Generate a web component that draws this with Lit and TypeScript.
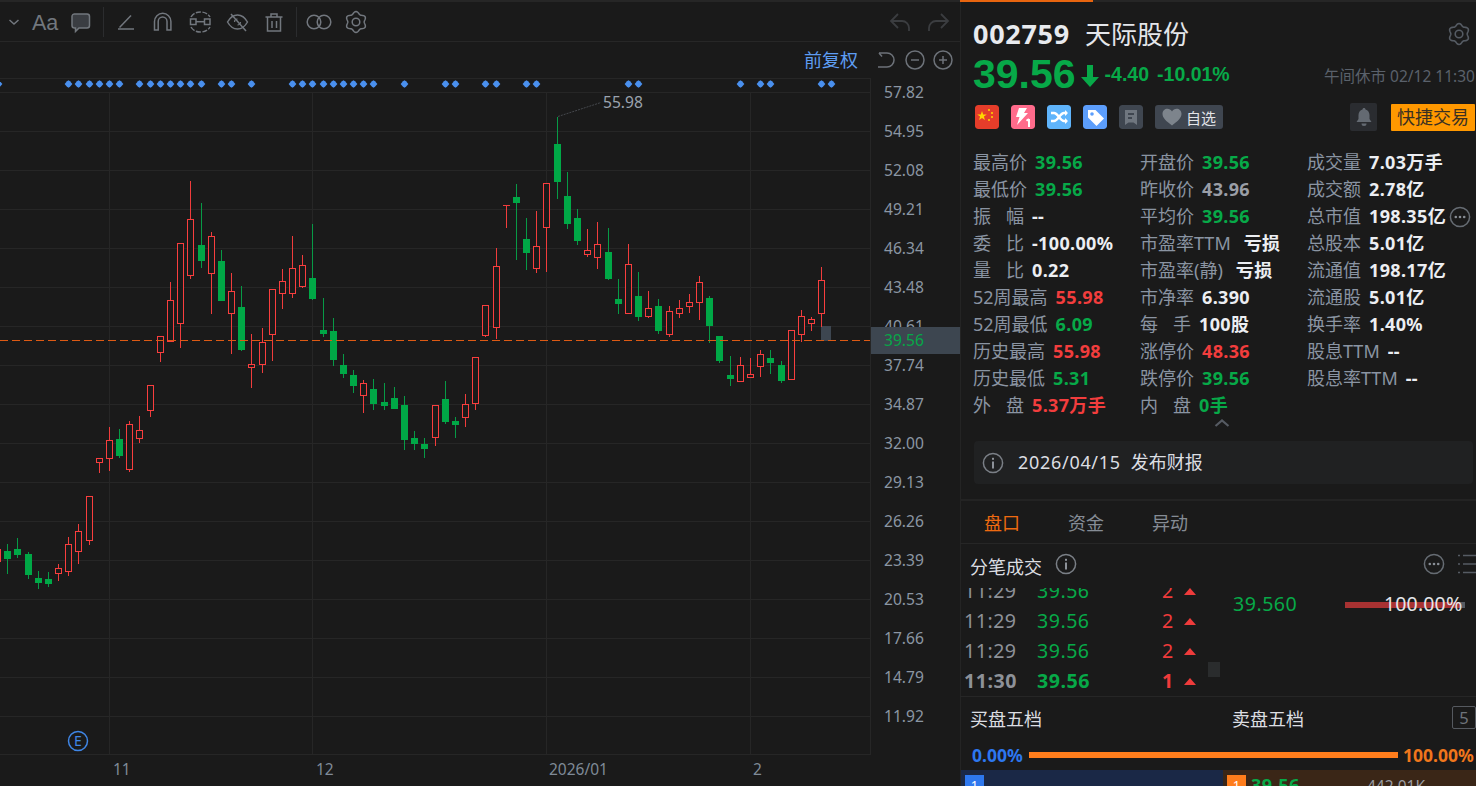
import { LitElement, html, css, svg } from "lit";
import { customElement } from "lit/decorators.js";

type C = [number, number, number, number, number, "r" | "g"];
// x, wick top, wick bottom, body top, body bottom, colour
const CANDLES: C[] = [
  [-3,549,562,549,562,"r"],[7,544,574,551,559,"g"],[17,538,558,549,555,"g"],[28,552,579,554,575,"g"],[38,571,589,578,583,"g"],[48,572,587,579,584,"g"],
  [58,564,581,568,574,"r"],[68,537,576,544,572,"r"],[78,524,564,531,552,"r"],[89,496,545,496,541,"r"],[99,458,473,458,463,"r"],[109,427,471,440,459,"r"],
  [119,429,458,439,456,"g"],[129,421,472,424,470,"r"],[139,416,443,430,439,"r"],[150,385,417,385,411,"r"],[160,336,362,336,353,"r"],[170,282,342,300,342,"r"],
  [180,243,348,243,324,"r"],[190,181,279,219,276,"r"],[201,203,268,245,261,"g"],[211,232,314,236,274,"r"],[221,250,301,261,301,"g"],[231,273,354,291,314,"r"],
  [241,286,351,307,350,"g"],[251,334,388,364,368,"r"],[262,328,373,342,365,"r"],[272,289,361,289,335,"r"],[282,269,309,281,294,"r"],[292,236,298,268,294,"r"],
  [302,255,288,265,287,"r"],[312,224,300,278,299,"g"],[323,298,337,330,334,"g"],[333,318,366,331,360,"g"],[343,354,378,365,374,"g"],[353,370,393,375,386,"g"],
  [363,380,413,383,396,"r"],[373,379,410,389,404,"g"],[384,383,410,402,406,"g"],[394,387,409,398,409,"g"],[404,396,450,405,440,"g"],[414,431,450,438,444,"g"],
  [424,438,458,444,449,"g"],[435,405,446,405,438,"r"],[445,381,424,399,422,"g"],[455,417,438,421,425,"g"],[465,394,427,404,418,"r"],[475,357,410,357,404,"r"],
  [485,305,337,305,336,"r"],[496,248,339,266,328,"r"],[506,205,228,205,205,"r"],[516,184,260,197,203,"g"],[526,218,270,239,253,"g"],[536,211,273,246,269,"r"],
  [546,183,272,183,228,"r"],[557,117,199,144,182,"g"],[567,172,229,196,224,"g"],[577,209,245,218,241,"g"],[587,229,257,250,255,"r"],[597,222,269,244,258,"r"],
  [608,228,280,252,279,"g"],[618,279,314,299,304,"g"],[628,244,314,264,314,"r"],[638,272,321,296,317,"g"],[648,291,318,308,317,"r"],[658,299,334,306,331,"g"],
  [669,306,337,311,335,"r"],[679,300,318,308,314,"r"],[689,294,313,302,307,"r"],[699,276,320,282,303,"r"],[709,296,343,298,326,"g"],[719,336,363,336,361,"g"],
  [730,356,386,375,379,"g"],[740,357,382,365,382,"r"],[750,358,378,374,378,"r"],[760,350,377,354,367,"r"],[770,350,374,358,363,"g"],[781,361,383,365,381,"g"],
  [791,330,380,330,380,"r"],[801,310,342,316,335,"r"],[811,317,331,319,324,"r"],[821,267,327,280,314,"r"],
];
const DIAMONDS = [-2,68,78,89,99,109,119,139,150,160,170,180,190,201,221,231,251,292,302,312,323,333,343,353,363,373,404,445,455,485,496,526,536,628,638,740,760,770,821,831];
const PRICES = ["57.82","54.95","52.08","49.21","46.34","43.48","40.61","37.74","34.87","32.00","29.13","26.26","23.39","20.53","17.66","14.79","11.92"];
const VLINES = [109, 312, 546, 750];

const TOP = 78;

interface Cell { l: string; v: string; c?: string; sp?: boolean; g?: number; m?: boolean }
const STATS: Cell[][] = [
  [
    { l: "最高价", v: "39.56", c: "g" }, { l: "最低价", v: "39.56", c: "g" }, { l: "振幅", v: "--", sp: true },
    { l: "委比", v: "-100.00%", sp: true }, { l: "量比", v: "0.22", sp: true }, { l: "52周最高", v: "55.98", c: "r" },
    { l: "52周最低", v: "6.09", c: "g" }, { l: "历史最高", v: "55.98", c: "r" }, { l: "历史最低", v: "5.31", c: "g" },
    { l: "外盘", v: "5.37万手", c: "r", sp: true },
  ],
  [
    { l: "开盘价", v: "39.56", c: "g" }, { l: "昨收价", v: "43.96", c: "n" }, { l: "平均价", v: "39.56", c: "g" },
    { l: "市盈率TTM", v: "亏损", g: 13 }, { l: "市盈率(静)", v: "亏损", g: 13 }, { l: "市净率", v: "6.390" },
    { l: "每手", v: "100股", sp: true }, { l: "涨停价", v: "48.36", c: "r" }, { l: "跌停价", v: "39.56", c: "g" },
    { l: "内盘", v: "0手", c: "g", sp: true },
  ],
  [
    { l: "成交量", v: "7.03万手" }, { l: "成交额", v: "2.78亿" }, { l: "总市值", v: "198.35亿", m: true },
    { l: "总股本", v: "5.01亿" }, { l: "流通值", v: "198.17亿" }, { l: "流通股", v: "5.01亿" },
    { l: "换手率", v: "1.40%" }, { l: "股息TTM", v: "--" }, { l: "股息率TTM", v: "--" },
  ],
];
const TICKS = [
  { t: "11:29", p: "39.56", n: "2" }, { t: "11:29", p: "39.56", n: "2" }, { t: "11:29", p: "39.56", n: "2" }, { t: "11:30", p: "39.56", n: "1", b: true },
];

// six rounded lobes around a centre, pointing up first
function gearPath(cx: number, cy: number, R: number) {
  const pts: string[] = [];
  for (let i = 0; i < 72; i++) {
    const a = (i / 72) * Math.PI * 2;
    const r = R * (0.89 + 0.11 * Math.cos(6 * a));
    const x = cx + r * Math.sin(a);
    const y = cy - r * Math.cos(a);
    pts.push(`${x.toFixed(2)} ${y.toFixed(2)}`);
  }
  return "M" + pts.join("L") + "Z";
}

const gear = svg`<svg class="ic" width="24" height="24" viewBox="0 0 24 24" fill="none" stroke="currentColor" stroke-width="1.600"><path d=${gearPath(12, 12, 10.500)}/><circle cx="12" cy="12" r="3.800"/></svg>`;

const moreCircle = svg`<svg width="22" height="22" viewBox="0 0 22 22" fill="none"><circle cx="11" cy="11" r="9.600" stroke="#666c73" stroke-width="1.500"/><circle cx="6.800" cy="11" r="1.300" fill="#888e95"/><circle cx="11" cy="11" r="1.300" fill="#888e95"/><circle cx="15.200" cy="11" r="1.300" fill="#888e95"/></svg>`;
const infoCircle = svg`<svg width="22" height="22" viewBox="0 0 22 22" fill="none"><circle cx="11" cy="11" r="9.600" stroke="#7a7f86" stroke-width="1.500"/><rect x="10" y="9.500" width="2" height="7" fill="#8d9299"/><rect x="10" y="5.800" width="2" height="2" fill="#8d9299"/></svg>`;

@customElement("app-root")
export class AppRoot extends LitElement {
  static styles = css`
    :host { display: block; width: 1476px; height: 786px; overflow: hidden; background: #1a1a1a; font-family: "Noto Sans", "Noto Sans CJK SC", sans-serif; color: #d8dade; }
    * { box-sizing: border-box; }
    .page { display: flex; width: 1476px; height: 786px; border-top: 2px solid #262626; position: relative; }
    .progress { position: absolute; left: 960px; top: -2px; width: 133px; height: 2px; background: #e8650f; }
    .left { width: 960px; flex: none; display: flex; flex-direction: column; }
    .toolbar { height: 40px; border-bottom: 1px solid #272727; flex: none; }
    .toolbar svg { display: block; }
    .subbar { height: 36px; flex: none; display: flex; justify-content: flex-end; align-items: center; padding-right: 7px; gap: 0; }
    .fq { font-size: 18px; color: #5e9df2; margin-right: 19px; line-height: 24px; }
    .subbar svg { display: block; margin-right: 8px; }
    .subbar svg:last-child { margin-right: 0; }
    .plotrow { display: flex; height: 677px; flex: none; position: relative; }
    .plot { width: 871px; height: 677px; flex: none; display: block; }
    .axis { flex: 1; display: flex; flex-direction: column; padding-top: 0; position: relative; }
    .axis span { height: 39px; line-height: 39px; padding-left: 13px; font-size: 15.6px; color: #8b96a3; }
    .axis .first { margin-top: -5px; }
    .marker { position: absolute; left: 0; right: 0; top: 249px; height: 27px; line-height: 27px; padding-left: 13px; background: #3d4650; color: #06a648; font-size: 15.6px; }
    .xaxis { position: relative; flex: 1; font-size: 15.5px; color: #7f8a97; }
    .xaxis span { position: absolute; top: 2px; line-height: 24px; }
    .right { width: 516px; flex: none; display: flex; flex-direction: column; overflow: hidden; box-shadow: inset 1px 0 0 #242424; }
    .head { padding: 17px 1px 0 13px; height: 147px; flex: none; }
    .l1 { display: flex; align-items: center; height: 30px; }
    .code { font-weight: 700; font-size: 27px; letter-spacing: .7px; color: #e8eaee; width: 112px; line-height: 30px; }
    .name { font-size: 26px; color: #e4e6ea; line-height: 30px; }
    .l1 .ic { margin-left: auto; color: #555b63; margin-right: 4px; display: block; }
    .l2 { display: flex; align-items: center; height: 44px; margin-top: 3px; white-space: nowrap; color: #07a948; font-family: "Liberation Sans", sans-serif; font-weight: 700; }
    .big { font-size: 41px; line-height: 44px; }
    .arrow { margin: 3px 6px 0 5px; display: block; }
    .chg { font-size: 19.500px; margin-right: 8px; line-height: 24px; margin-top: 0; }
    .time { margin-left: auto; font: 400 15.500px "Noto Sans", "Noto Sans CJK SC", sans-serif; color: #5a616b; margin-top: 2px; margin-right: -13px; width: 164px; }
    .l3 { display: flex; align-items: center; margin-top: 7px; height: 28px; padding-left: 2px; }
    .badge { width: 24px; height: 24px; border-radius: 3px; margin-right: 12px; display: block; }
    .fav { width: 68px; height: 24px; border-radius: 3px; background: #3f4650; display: flex; align-items: center; padding-left: 7px; gap: 4px; font-size: 15px; color: #e2e4e8; }
    .bell { margin-left: auto; width: 27px; height: 28px; background: #2a2c30; border-radius: 2px; display: flex; align-items: center; justify-content: center; margin-right: 14px; }
    .quick { width: 84px; height: 27px; background: #ff9800; color: #3a3022; font-size: 18px; text-align: center; line-height: 27px; border-radius: 1px; }
    .stats { display: grid; grid-template-columns: 167px 167px 1fr; padding-left: 13px; height: 270px; flex: none; }
    .col { display: flex; flex-direction: column; }
    .cell { height: 27px; display: flex; align-items: center; font-size: 18px; line-height: 27px; white-space: nowrap; gap: 8px; position: relative; }
    .lab { color: #8a94a2; }
    .lab.sp { width: 51px; display: flex; justify-content: space-between; }
    .val { font-weight: 700; color: #eceef2; letter-spacing: .35px; }
    .val.g { color: #07a948; } .val.r { color: #f23d3d; } .val.n { color: #9a9ea6; }
    .cell svg { position: absolute; left: 142px; top: 3px; }
    .collapse { height: 22px; flex: none; display: flex; justify-content: center; padding: 0; margin-left: 7px; }
    .collapse svg { display: block; margin-top: -1px; }
    .notice { margin: 0 3px 0 14px; height: 43px; flex: none; background: #202122; border-radius: 4px; display: flex; align-items: center; padding-left: 8px; font-size: 18px; color: #dcdee2; gap: 4px; }
    .notice .date { margin-left: 10px; letter-spacing: .7px; margin-right: 6px; line-height: 24px; margin-top: -1px; }
    .notice .what { line-height: 24px; margin-top: -1px; }
    .sep { height: 2px; flex: none; background: #232323; margin-top: 15px; }
    .tabs { height: 43px; flex: none; display: flex; align-items: center; padding-left: 24px; gap: 48px; font-size: 18px; color: #858c95; border-bottom: 1px solid #262626; }
    .tabs .on { color: #ee6a10; }
    .thead { height: 44px; flex: none; display: flex; align-items: center; padding-left: 10px; font-size: 18px; color: #dcdee2; }
    .thead .inf { margin-left: 13px; display: block; }
    .thead .more { margin-left: auto; display: block; margin-right: 13px; }
    .thead .lst { display: block; margin-right: -2px; }
    .body { height: 108px; flex: none; display: flex; overflow: hidden; position: relative; }
    .ticks { width: 272px; flex: none; display: flex; flex-direction: column; justify-content: flex-end; padding-bottom: 0; }
    .tick { height: 30px; flex: none; display: flex; align-items: center; font-size: 19.600px; padding-left: 4px; line-height: 30px; letter-spacing: .5px; }
    .tick .t { width: 73px; color: #8d9198; }
    .tick .p { width: 125px; color: #07a948; }
    .tick .n { width: 22px; color: #ef3b3b; }
    .tick.b { font-weight: 700; }
    .tick svg { display: block; }
    .scroll { position: absolute; left: 248px; top: 74px; width: 12px; height: 15px; background: #2a2c2d; }
    .fill { position: relative; flex: 1; }
    .fp { position: absolute; left: 1px; top: 1px; color: #07a948; font-size: 19.600px; line-height: 30px; letter-spacing: .5px; }
    .fbar { position: absolute; left: 113px; top: 14px; width: 120px; height: 6px; background: #565b62; }
    .fbar i { display: block; width: 115px; height: 6px; background: #a83232; }
    .fpc { position: absolute; left: 152px; top: 1px; color: #e4e6ea; font-size: 19.600px; line-height: 30px; letter-spacing: .1px; }
    .blocks { border-top: 1px solid #262626; flex: 1; display: flex; flex-direction: column; }
    .bhead { height: 43px; flex: none; display: flex; align-items: center; padding: 0 0 2px 10px; font-size: 18px; color: #dcdee2; }
    .bhead span:first-child { width: 262px; }
    .bhead b { margin-left: auto; font-weight: 400; width: 24px; height: 23px; border: 1px solid #55595f; border-radius: 2px; color: #6e737a; text-align: center; line-height: 21px; font-size: 16.500px; }
    .ratio { height: 30px; flex: none; display: flex; align-items: center; font-weight: 700; font-size: 17.500px; padding-left: 12px; white-space: nowrap; }
    .ratio .bl { color: #2d77ef; width: 57px; }
    .ratio .bar { width: 369px; height: 6px; background: #ff7d1c; flex: none; }
    .ratio .or { color: #f0761c; margin-left: 5px; }
    .book { flex: 1; display: flex; padding-left: 1px; }
    .bb { width: 262px; background: #1a2846; padding-left: 4px; }
    .bs { flex: 1; background: #3a2617; padding-left: 4px; display: flex; font-size: 17px; overflow: hidden; }
    .tag { display: block; width: 19px; height: 22px; margin-top: 5px; color: #fff; text-align: center; font-size: 13px; line-height: 20px; }
    .bb .tag { background: #2e78ee; }
    .bs .tag { background: #ff7d1c; }
    .bp { margin-left: 5px; color: #07a948; font-weight: 700; font-size: 18px; line-height: 24px; margin-top: 3px; letter-spacing: .5px; }
    .bv { margin-left: auto; margin-right: 51px; color: #9a9da3; font-size: 15.500px; line-height: 24px; margin-top: 4px; }
    text { font-family: "Noto Sans", sans-serif; }
  `;

  private plot() {
    const hs = [] as number[];
    for (let i = 0; i < 17; i++) hs.push(92 + 39 * i - TOP);
    return svg`<svg class="plot" width="871" height="677" viewBox="0 0 871 677" shape-rendering="crispEdges">
      <rect x="0" y="0" width="870" height="1" fill="#262626"/>
      <rect x="0" y="676" width="870" height="1" fill="#262626"/>
      <rect x="870" y="0" width="1" height="677" fill="#262626"/>
      ${hs.map((y) => svg`<rect x="0" y=${y} width="870" height="1" fill="#262626"/>`)}
      ${VLINES.map((x) => svg`<rect x=${x} y="14" width="1" height="662" fill="#262626"/>`)}
      ${DIAMONDS.map((x) => svg`<path shape-rendering="auto" d="M${x + 0.5} ${2.2} L${x + 2} 3.2 L${x + 4.4} 6 L${x + 2} 8.800 L${x + 0.5} 9.800 L${x - 1} 8.800 L${x - 3.4} 6 L${x - 1} 3.200 Z" fill="#4a90ee"/>`)}
      <rect x="821" y=${326 - TOP} width="10" height="15" fill="#3d4650"/>
      ${CANDLES.map((c) => this.candle(c))}
      <path d=${`M0 ${340.5 - TOP}H870`} stroke="#dd5a14" stroke-width="1" stroke-dasharray="8 4" fill="none"/>
      <path shape-rendering="auto" d=${`M558 ${116.5 - TOP}L601 ${102.5 - TOP}`} stroke="#45484d" stroke-dasharray="2 1" fill="none"/>
      <text shape-rendering="auto" x="603" y=${108 - TOP} font-size="15.600" fill="#9aa3ae">55.98</text>
      <g shape-rendering="auto" transform=${`translate(78 ${741 - TOP})`}>
        <circle r="9.500" fill="none" stroke="#3f86e6" stroke-width="1.500"/>
        <text x="0" y="5.200" text-anchor="middle" font-size="14" fill="#3f86e6">E</text>
      </g>
    </svg>`;
  }

  private candle([x, wt, wb, bt, bb, col]: C) {
    const wickCol = col === "g" ? "#079a46" : "#f03c3c";
    const t = wt - TOP, w = wb - TOP, b1 = bt - TOP, b2 = bb - TOP;
    if (bt === bb) {
      return svg`<rect x=${x} y=${t} width="1" height=${w - t} fill=${wickCol}/><rect x=${x - 3} y=${b1} width="7" height="1" fill=${wickCol}/>`;
    }
    const wick = svg`<rect x=${x} y=${t} width="1" height=${w - t} fill=${wickCol}/>`;
    if (col === "g") {
      return svg`${wick}<rect x=${x - 3} y=${b1} width="7" height=${b2 - b1} fill="#00a846"/>`;
    }
    return svg`${wick}<rect x=${x - 2.5} y=${b1 + 0.5} width="6" height=${b2 - b1 - 1} fill="#1a1a1a" stroke="#f93e3e" stroke-width="1"/>`;
  }

  private toolbar() {
    const s = "#72777e";
    return svg`<svg width="960" height="39" viewBox="0 2 960 39" fill="none" stroke=${s} stroke-width="1.500">
      <path d="M9.500 20l4.500 4 4.500-4"/>
      <text x="32" y="30" font-size="21.500" fill="#72777e" stroke="none" style="font-family:'Liberation Sans',sans-serif">Aa</text>
      <path d="M75 14h12a2.500 2.500 0 0 1 2.500 2.500v9a2.500 2.500 0 0 1-2.500 2.500h-8l-3.500 3.500V28h-1a2.500 2.500 0 0 1-2.500-2.500v-9A2.500 2.500 0 0 1 75 14z" fill="#3a3d42" stroke="#72777d"/>
      <path d="M103.500 7v30M296.500 7v30" stroke="#2b2c2e" stroke-width="1"/>
      <path d="M119.500 27.500L131 15.500"/><path d="M118 29h16" stroke-width="1.500"/>
      <path d="M154.500 30V21.500a8.200 8.200 0 0 1 16.400 0V30H167V21.500a4.400 4.400 0 0 0-8.800 0V30z"/>
      <rect x="190.500" y="19" width="5.500" height="5.500"/><rect x="204.500" y="19" width="5.500" height="5.500"/><path d="M196 21.700h8.500"/>
      <path d="M191 17c2-3.500 5.500-5 9.500-5s7.500 1.500 9.500 5M191 27c2 3.500 5.500 5 9.500 5s7.500-1.500 9.500-5" stroke-dasharray="5 1.500"/>
      <path d="M227.500 22c2.600-4.600 5.800-7 10-7s7.400 2.400 10 7c-2.600 4.600-5.800 7-10 7s-7.400-2.400-10-7z"/><path d="M231 14l15 17"/><path d="M234.500 22a3 3 0 0 1 3-3M240.500 22a3 3 0 0 1-3 3" stroke-width="1.200"/>
      <path d="M265.500 17h17M271 17v-3h6v3M267.500 17v14h13V17M272 21v7M276.500 21v7"/>
      <circle cx="314" cy="22" r="6.800"/><circle cx="324" cy="22" r="6.800"/>
      <path d=${gearPath(356, 22, 10.500)}/><circle cx="356" cy="22" r="3.800"/>
      <g stroke="#3b3d40" stroke-width="1.800"><path d="M909 31v-3a7 7 0 0 0-7-7H892M898 14l-7 7 7 7"/><path d="M929 31v-3a7 7 0 0 1 7-7h11M941 14l7 7-7 7"/></g>
    </svg>`;
  }

  render() {
    return html`<div class="page">
      <div class="progress"></div>
      <div class="left">
        <div class="toolbar">${this.toolbar()}</div>
        <div class="subbar">
          <span class="fq">前复权</span>
          ${svg`<svg width="20" height="20" viewBox="0 0 20 20" fill="none" stroke="#6d7279" stroke-width="1.500"><path d="M2 3h8a7 7 0 0 1 0 14H1"/><path d="M2 3l3 3.500"/></svg>`}
          ${svg`<svg width="20" height="20" viewBox="0 0 20 20" fill="none" stroke="#6d7279" stroke-width="1.500"><circle cx="10" cy="10" r="9"/><path d="M6 10h8"/></svg>`}
          ${svg`<svg width="20" height="20" viewBox="0 0 20 20" fill="none" stroke="#6d7279" stroke-width="1.500"><circle cx="10" cy="10" r="9"/><path d="M6 10h8M10 6v8"/></svg>`}
        </div>
        <div class="plotrow">
          ${this.plot()}
          <div class="axis">
            ${PRICES.map((p, i) => html`<span class=${i === 0 ? "first" : ""}>${p}</span>`)}
            <div class="marker">39.56</div>
          </div>
        </div>
        <div class="xaxis">
          <span style="left:113px">11</span><span style="left:316px">12</span><span style="left:549px">2026/01</span><span style="left:753px">2</span>
        </div>
      </div>
      <div class="right">
        <div class="head">
          <div class="l1"><span class="code">002759</span><span class="name">天际股份</span>${gear}</div>
          <div class="l2">
            <span class="big">39.56</span>
            ${svg`<svg class="arrow" width="18" height="22" viewBox="0 0 18 22"><path d="M6 0h6v12h6L9 22 0 12h6z" fill="#07a948"/></svg>`}
            <span class="chg">-4.40</span><span class="chg">-10.01%</span>
            <span class="time">午间休市 02/12 11:30</span>
          </div>
          <div class="l3">
            ${svg`<svg class="badge" viewBox="0 0 24 24"><rect width="24" height="24" rx="3" fill="#e53d2a"/><path d="M7 6l1.200 3.400 3.600.1-2.900 2.100 1 3.400-2.900-2-2.900 2 1-3.400-2.900-2.100 3.600-.1z" fill="#ffd700"/><circle cx="14" cy="5" r="1" fill="#ffd700"/><circle cx="17" cy="8" r="1" fill="#ffd700"/><circle cx="17" cy="12" r="1" fill="#ffd700"/><circle cx="14" cy="15" r="1" fill="#ffd700"/></svg>`}
            ${svg`<svg class="badge" viewBox="0 0 24 24"><rect width="24" height="24" rx="3" fill="#ff6b8b"/><path d="M8 3h8l-3 5h4L6 20l2.500-8H5z" fill="#fff"/><path d="M18 14v8M15.500 15.800l2.500-1.800" stroke="#fff" stroke-width="2" fill="none"/></svg>`}
            ${svg`<svg class="badge" viewBox="0 0 24 24"><rect width="24" height="24" rx="3" fill="#5fb4fb"/><path d="M4 8h3c4 0 6 8 10 8h3M4 16h3c4 0 6-8 10-8h3" fill="none" stroke="#fff" stroke-width="2.400"/><path d="M18 5l3 3-3 3zM18 13l3 3-3 3z" fill="#fff"/></svg>`}
            ${svg`<svg class="badge" viewBox="0 0 24 24"><rect width="24" height="24" rx="3" fill="#5c9efc"/><path d="M5 5h7.500L21 13.500 13.500 21 5 12.500z" fill="#fff"/><circle cx="9" cy="9" r="1.800" fill="#5c9efc"/></svg>`}
            ${svg`<svg class="badge" viewBox="0 0 24 24"><rect width="24" height="24" rx="3" fill="#3f4650"/><path d="M6 5h12v15l-3.500-2.500h-5L6 20z" fill="#6f767f"/><path d="M9 9h6M9 13h4" stroke="#3f4650" stroke-width="2"/></svg>`}
            <div class="fav">
              ${svg`<svg width="20" height="18" viewBox="0 0 20 18"><path d="M10 17.500C4 13 .5 10 .5 5.800.5 2.800 2.800.8 5.400.8c1.900 0 3.500 1 4.600 2.600C11.100 1.800 12.700.8 14.600.8c2.600 0 4.900 2 4.900 5C19.500 10 16 13 10 17.500z" fill="#7d848c"/></svg>`}
              <span>自选</span>
            </div>
            <div class="bell">${svg`<svg width="16" height="20" viewBox="0 0 16 20"><path d="M8 1c.9 0 1.500.6 1.500 1.500C12 3.300 13.500 5.500 13.500 8v4l2 3H.5l2-3V8C2.500 5.500 4 3.300 6.500 2.500 6.500 1.600 7.100 1 8 1z" fill="#646a72"/><path d="M5.500 16.500h5a2.500 2.500 0 0 1-5 0z" fill="#646a72"/></svg>`}</div>
            <div class="quick">快捷交易</div>
          </div>
        </div>
        <div class="stats">
          ${STATS.map((col) => html`<div class="col">${col.map((c) => html`<div class="cell">
            ${c.sp
              ? html`<span class="lab sp"><span>${c.l[0]}</span><span>${c.l[1]}</span></span>`
              : html`<span class="lab">${c.l}</span>`}
            <span class="val ${c.c ?? ""}" style=${c.g ? `margin-left:${c.g - 8}px` : ""}>${c.v}</span>
            ${c.m ? moreCircle : ""}
          </div>`)}</div>`)}
        </div>
        <div class="collapse">${svg`<svg width="16" height="10" viewBox="0 0 16 10" fill="none" stroke="#565b63" stroke-width="2.200"><path d="M1.500 8L8 2.500 14.500 8"/></svg>`}</div>
        <div class="notice">${infoCircle}<span class="date">2026/04/15</span><span class="what">发布财报</span></div>
        <div class="sep"></div>
        <div class="tabs"><span class="on">盘口</span><span>资金</span><span>异动</span></div>
        <div class="thead">
          <span>分笔成交</span>
          <span class="inf">${infoCircle}</span>
          <span class="more">${moreCircle}</span>
          <span class="lst">${svg`<svg width="20" height="20" viewBox="0 0 20 20" stroke="#565b63" stroke-width="1.500"><path d="M0 1.500h2M5 1.500h15M0 10h2M5 10h15M0 18.500h2M5 18.500h15"/></svg>`}</span>
        </div>
        <div class="body">
          <div class="ticks">
            ${TICKS.map((t) => html`<div class="tick ${t.b ? "b" : ""}"><span class="t">${t.t}</span><span class="p">${t.p}</span><span class="n">${t.n}</span>${svg`<svg width="12" height="7" viewBox="0 0 12 7"><path d="M6 0l6 7H0z" fill="#ef3b3b"/></svg>`}</div>`)}
          </div>
          <div class="scroll"></div>
          <div class="fill">
            <span class="fp">39.560</span>
            <div class="fbar"><i></i></div>
            <span class="fpc">100.00%</span>
          </div>
        </div>
        <div class="blocks">
          <div class="bhead"><span>买盘五档</span><span>卖盘五档</span><b>5</b></div>
          <div class="ratio"><span class="bl">0.00%</span><span class="bar"></span><span class="or">100.00%</span></div>
          <div class="book">
            <div class="bb"><span class="tag">1</span></div>
            <div class="bs"><span class="tag">1</span><span class="bp">39.56</span><span class="bv">442.01K</span></div>
          </div>
        </div>
      </div>
    </div>`;
  }
}
